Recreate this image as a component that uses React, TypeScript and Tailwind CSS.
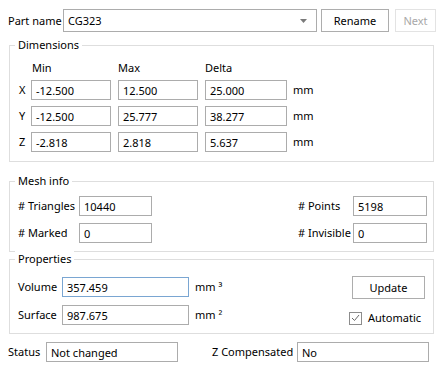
import { Fragment } from "react";

const dimRows = [
  { axis: "X", min: "-12.500", max: "12.500", delta: "25.000" },
  { axis: "Y", min: "-12.500", max: "25.777", delta: "38.277" },
  { axis: "Z", min: "-2.818", max: "2.818", delta: "5.637" },
];

function Field({ value, className = "", focused = false }: { value: string; className?: string; focused?: boolean }) {
  return (
    <div
      className={`h-[20px] shrink-0 bg-white border ${focused ? "border-[#7aa6d2]" : "border-[#acacac]"} pl-[4px] flex items-center leading-none ${className}`}
    >
      {value}
    </div>
  );
}

function Group({ title, className = "", children }: { title: string; className?: string; children: React.ReactNode }) {
  return (
    <div className={`relative ml-[9px] w-[425px] border border-[#dedede] ${className}`}>
      <span className="absolute left-[5px] -top-[9px] bg-white px-[3px] leading-[16px]">{title}</span>
      {children}
    </div>
  );
}

function Button({ label, disabled = false, className = "" }: { label: string; disabled?: boolean; className?: string }) {
  return (
    <button
      className={`h-[23px] shrink-0 border bg-white flex items-center justify-center ${
        disabled ? "border-[#e3e3e3] text-[#a8a8a8]" : "border-[#adadad] text-black"
      } ${className}`}
    >
      {label}
    </button>
  );
}

export default function App() {
  return (
    <div className="w-[445px] h-[370px] bg-white text-black text-[11px] leading-[16px] whitespace-nowrap font-['Noto_Sans',sans-serif] overflow-hidden">
      <div className="flex items-center pt-[9px] pl-[8px]">
        <span className="w-[55px] shrink-0">Part name</span>
        <div className="w-[254px] h-[23px] shrink-0 border border-[#acacac] bg-white flex items-center justify-between pl-[4px] pr-[9px]">
          <span>CG323</span>
          <svg width="7" height="4" viewBox="0 0 7 4">
            <path d="M0 0 L7 0 L3.5 4 Z" fill="#7a7a7a" />
          </svg>
        </div>
        <Button label="Rename" className="ml-[4px] w-[68px]" />
        <Button label="Next" disabled className="ml-[6px] w-[41px]" />
      </div>

      <Group title="Dimensions" className="mt-[13px] pt-[15px] pb-[9px] pl-[9px]">
        <div className="grid grid-cols-[12px_87px_87px_88px_auto] gap-y-[6px] items-center">
          <span />
          <span className="leading-[13px] pl-[1px]">Min</span>
          <span className="leading-[13px]">Max</span>
          <span className="leading-[13px]">Delta</span>
          <span />
          {dimRows.map((r) => (
            <Fragment key={r.axis}>
              <span>{r.axis}</span>
              <Field value={r.min} className="w-[80px]" />
              <Field value={r.max} className="w-[80px]" />
              <Field value={r.delta} className="w-[82px]" />
              <span>mm</span>
            </Fragment>
          ))}
        </div>
      </Group>

      <Group title="Mesh info" className="mt-[19px] pt-[14px] pb-[8px] pl-[8px] pr-[6px] flex justify-between">
        <div className="flex flex-col gap-[7px]">
          <div className="flex items-center">
            <span className="w-[61px] shrink-0"># Triangles</span>
            <Field value="10440" className="w-[73px]" />
          </div>
          <div className="flex items-center">
            <span className="w-[61px] shrink-0"># Marked</span>
            <Field value="0" className="w-[73px]" />
          </div>
        </div>
        <div className="flex flex-col gap-[7px]">
          <div className="flex items-center">
            <span className="w-[55px] shrink-0"># Points</span>
            <Field value="5198" className="w-[74px]" />
          </div>
          <div className="flex items-center">
            <span className="w-[55px] shrink-0"># Invisible</span>
            <Field value="0" className="w-[74px]" />
          </div>
        </div>
      </Group>

      <Group title="Properties" className="mt-[7px] pt-[17px] pb-[7px] pl-[8px] pr-[8px] flex justify-between">
        <div className="flex flex-col gap-[8px]">
          <div className="flex items-center">
            <span className="w-[44px] shrink-0">Volume</span>
            <Field value="357.459" focused className="w-[127px]" />
            <span className="ml-[6px]">mm ³</span>
          </div>
          <div className="flex items-center">
            <span className="w-[44px] shrink-0">Surface</span>
            <Field value="987.675" className="w-[127px]" />
            <span className="ml-[6px]">mm ²</span>
          </div>
        </div>
        <div className="flex flex-col items-start -mt-[1px]">
          <Button label="Update" className="ml-[3px] w-[73px]" />
          <div className="flex items-center mt-[11px]">
            <div className="w-[13px] h-[13px] border border-[#8c8c8c] bg-white flex items-center justify-center">
              <svg width="9" height="8" viewBox="0 0 9 8">
                <path d="M1 4 L3.5 6.5 L8 1" fill="none" stroke="#6a6a6a" strokeWidth="1" />
              </svg>
            </div>
            <span className="ml-[6px]">Automatic</span>
          </div>
        </div>
      </Group>

      <div className="flex items-center mt-[8px] pl-[8px]">
        <span className="w-[38px] shrink-0">Status</span>
        <Field value="Not changed" className="w-[132px]" />
        <span className="ml-[34px] w-[85px] shrink-0">Z Compensated</span>
        <Field value="No" className="w-[132px]" />
      </div>
    </div>
  );
}
